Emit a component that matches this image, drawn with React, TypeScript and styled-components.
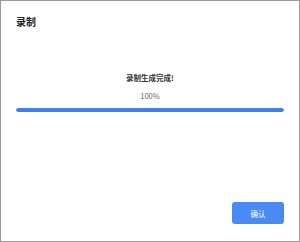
import React from 'react';
import styled, { createGlobalStyle } from 'styled-components';

const GlobalStyle = createGlobalStyle`
  html, body {
    margin: 0;
    padding: 0;
    background: #ffffff;
  }
  body {
    font-family: "Noto Sans CJK SC", "Noto Sans", sans-serif;
  }
`;

const Dialog = styled.div`
  box-sizing: border-box;
  width: 300px;
  height: 242px;
  border: 1px solid #9a9a9a;
  background: #ffffff;
  display: flex;
  flex-direction: column;
  padding: 0 15px 0 15px;
`;

const Title = styled.div`
  margin-top: 13px;
  font-size: 10px;
  line-height: 16px;
  font-weight: 700;
  color: #222222;
`;

const Body = styled.div`
  display: flex;
  flex-direction: column;
  align-items: center;
  margin-top: 43px;
`;

const Message = styled.div`
  font-size: 7.5px;
  line-height: 10px;
  font-weight: 600;
  color: #333333;
`;

const Percent = styled.div`
  margin-top: 8px;
  font-size: 7.5px;
  line-height: 10px;
  color: #666666;
`;

const Track = styled.div`
  align-self: stretch;
  margin-top: 7px;
  height: 4px;
  border-radius: 2px;
  background: #e6e6e6;
  overflow: hidden;
`;

const Fill = styled.div`
  height: 100%;
  border-radius: 2px;
  background: #3f7ff0;
`;

const Footer = styled.div`
  margin-top: auto;
  margin-bottom: 17px;
  display: flex;
  justify-content: flex-end;
`;

const ConfirmButton = styled.button`
  width: 52px;
  height: 22px;
  border: none;
  border-radius: 3px;
  background: #4a8af4;
  color: #ffffff;
  font-family: inherit;
  font-size: 7.5px;
  padding: 0;
  cursor: pointer;
`;

const App: React.FC = () => {
  const progress = 100;
  return (
    <>
      <GlobalStyle />
      <Dialog>
        <Title>录制</Title>
        <Body>
          <Message>录制生成完成!</Message>
          <Percent>{progress}%</Percent>
          <Track>
            <Fill style={{ width: `${progress}%` }} />
          </Track>
        </Body>
        <Footer>
          <ConfirmButton>确认</ConfirmButton>
        </Footer>
      </Dialog>
    </>
  );
};

export default App;
